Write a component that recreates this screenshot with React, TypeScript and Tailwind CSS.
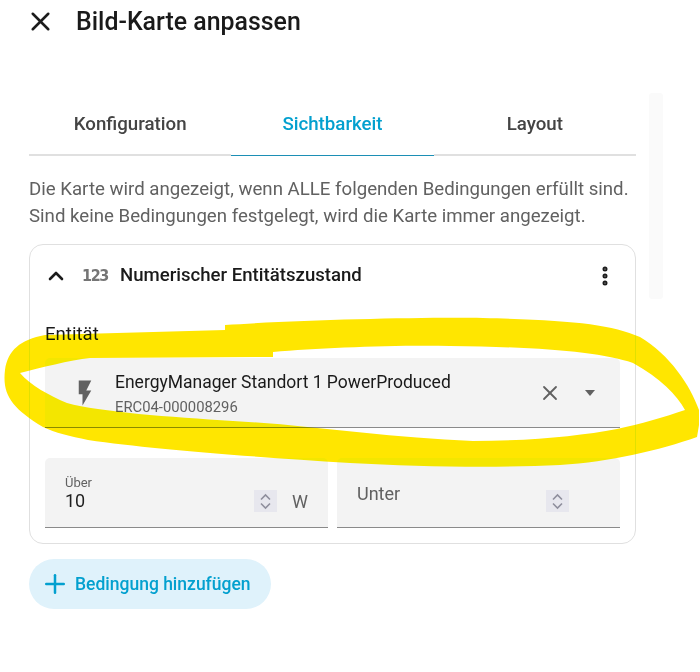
import { ChevronUp, EllipsisVertical, Plus, X } from 'lucide-react';

function Spinner() {
  return (
    <div className="w-[23px] h-[22px] bg-[#e7e7ee] flex flex-col items-center justify-center gap-[1px]">
      <svg width="13" height="8" viewBox="0 0 13 8" fill="none" stroke="#8f8f9d" strokeWidth="1.6"><path d="M2 6.5 L6.5 2 L11 6.5" /></svg>
      <svg width="13" height="8" viewBox="0 0 13 8" fill="none" stroke="#8f8f9d" strokeWidth="1.6"><path d="M2 1.5 L6.5 6 L11 1.5" /></svg>
    </div>
  );
}

export default function App() {
  return (
    <div className="relative w-[700px] h-[672px] overflow-hidden bg-white font-['Roboto',sans-serif]">
      {/* Header */}
      <div className="flex items-center h-[42px] pl-[25px]">
        <X className="w-[31px] h-[31px] text-[#1c1c1c]" strokeWidth={2} />
        <h1 className="ml-[20px] mt-[2px] text-[24.9px] font-medium text-[#1a1a1a]">Bild-Karte anpassen</h1>
      </div>

      <div className="ml-[29px] w-[607px] mt-[51px]">
        {/* Tabs */}
        <div className="flex h-[63px] border-b-2 border-[#e0e0e0]">
          <div className="flex-1 flex items-center justify-center pt-[2px] text-[18.7px] font-medium text-[#444444]">Konfiguration</div>
          <div className="flex-1 flex items-center justify-center text-[18.7px] font-medium text-[#03a0cf] bg-white border-b border-[#1c8fb5] -mb-[2px]">Sichtbarkeit</div>
          <div className="flex-1 flex items-center justify-center pt-[2px] text-[18.7px] font-medium text-[#444444]">Layout</div>
        </div>

        <p className="mt-[20px] text-[18.65px] leading-[27px] text-[#616161] whitespace-nowrap">
          Die Karte wird angezeigt, wenn ALLE folgenden Bedingungen erfüllt sind.
          <br />
          Sind keine Bedingungen festgelegt, wird die Karte immer angezeigt.
        </p>

        {/* Condition card */}
        <div className="mt-[14px] h-[300px] rounded-[14px] border border-[#e0e0e0] px-[15px]">
          <div className="flex items-center h-[62px]">
            <ChevronUp className="w-[24px] h-[24px] text-[#1c1c1c] -ml-[1.5px]" strokeWidth={2.6} />
            <span className="ml-[14px] w-[26px] text-[16px] font-bold text-[#757575] font-['DejaVu_Sans',sans-serif] tracking-[-1.5px] scale-x-90 origin-left">123</span>
            <span className="ml-[12.5px] text-[18.6px] font-medium text-[#1a1a1a]">Numerischer Entitätszustand</span>
            <EllipsisVertical className="ml-auto mr-[3px] w-[24px] h-[24px] text-[#1c1c1c]" strokeWidth={3} />
          </div>

          <div className="mt-[15px] text-[18.6px] leading-[24px] text-[#1a1a1a]">Entität</div>

          <div className="mt-[12px] h-[70px] bg-[#f3f3f3] rounded-t-[5px] border-b border-[#8a8a8a] flex items-center">
            <svg className="ml-[25px] w-[30px] h-[30px]" viewBox="0 0 24 24" fill="#616161"><path d="M7 2v11h3v9l7-12h-4l4-8z" /></svg>
            <div className="ml-[15px] flex flex-col">
              <span className="text-[17.5px] leading-[24px] text-[#1a1a1a] whitespace-nowrap">EnergyManager Standort 1 PowerProduced</span>
              <span className="mt-[4px] text-[14.8px] leading-[18px] text-[#616161]">ERC04-000008296</span>
            </div>
            <X className="ml-auto w-[24px] h-[24px] text-[#616161]" strokeWidth={1.8} />
            <svg className="ml-[21px] mr-[23px] w-[14px] h-[8px]" viewBox="0 0 14 8" fill="#616161"><path d="M2 1h10l-5 6z" /></svg>
          </div>

          <div className="mt-[30px] grid grid-cols-2 gap-[9px]">
            <div className="h-[70px] bg-[#f3f3f3] rounded-t-[5px] border-b border-[#8a8a8a] flex items-center pl-[20px] pr-[20px]">
              <div className="flex flex-col mt-[2px]">
                <span className="text-[13px] leading-[15px] text-[#616161]">Über</span>
                <span className="text-[18px] leading-[22px] text-[#1f1f1f]">10</span>
              </div>
              <div className="ml-auto mt-[17px]"><Spinner /></div>
              <span className="ml-[15px] mt-[17px] text-[18px] text-[#616161]">W</span>
            </div>
            <div className="h-[70px] bg-[#f3f3f3] rounded-t-[5px] border-b border-[#8a8a8a] flex items-center pl-[20px] pr-[51px]">
              <span className="text-[18px] text-[#616161] mt-[1px]">Unter</span>
              <div className="ml-auto mt-[17px]"><Spinner /></div>
            </div>
          </div>
        </div>

        {/* Add button */}
        <div className="mt-[15px] inline-flex items-center h-[50px] w-[242px] rounded-full bg-[#dff2fb] pl-[11px]">
          <Plus className="w-[30px] h-[30px] text-[#03a0cf]" strokeWidth={2} />
          <span className="ml-[5px] text-[17.5px] font-medium text-[#03a0cf] whitespace-nowrap">Bedingung hinzufügen</span>
        </div>
      </div>

      {/* Scrollbar */}
      <div className="absolute left-[649px] top-[93px] w-[14px] h-[206px] rounded-[3px] bg-[#fafafa]" />

      {/* Hand-drawn highlight */}
      <svg className="absolute inset-0 mix-blend-darken" width="700" height="672" viewBox="0 0 700 672">
        <path
          fill="#ffe600"
          d="M225 325 V330 L45 335 C20 340 8 350 5 370 C2 395 12 408 43 427 C55 433 70 436 88 440 C150 449 240 456 350 463 C420 467 500 468 560 465 C610 462 660 450 697 437 L699 425 L699 410 C690 385 670 355 640 337 C610 324 570 320 483 318 C420 317 300 320 225 325 Z M273 352 V357 L90 358 C70 360 40 368 20 373 C30 385 50 396 67 403 C100 412 170 417 233 421 C310 425 390 438 473 441 C530 441 580 436 617 429 C640 424 665 417 685 410 C677 395 660 378 633 363 C600 352 540 347 450 346 C390 345 320 348 273 352 Z"
          fillRule="evenodd"
        />
      </svg>
    </div>
  );
}
